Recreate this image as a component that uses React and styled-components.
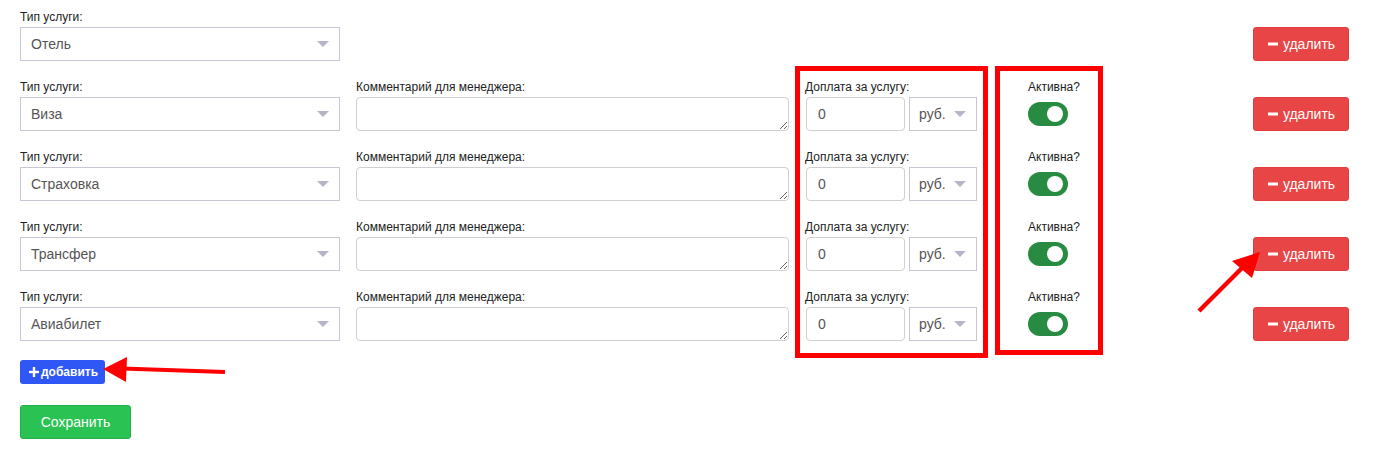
import styled, { createGlobalStyle } from 'styled-components';

const GlobalStyle = createGlobalStyle`
  body {
    margin: 0;
    background: #fff;
    font-family: "Liberation Sans", Arial, sans-serif;
    color: #222;
  }
`;

const services = ['Виза', 'Страховка', 'Трансфер', 'Авиабилет'];

const MinusIcon = () => (
  <svg width="10" height="10" viewBox="0 0 10 10">
    <rect x="0" y="3.5" width="10" height="3" fill="#fff" />
  </svg>
);

const PlusIcon = () => (
  <svg width="10" height="10" viewBox="0 0 10 10">
    <rect x="0" y="3.8" width="10" height="2.4" fill="#fff" />
    <rect x="3.8" y="0" width="2.4" height="10" fill="#fff" />
  </svg>
);

const App = () => {
  return (
    <Page>
      <GlobalStyle />
      <ServiceRow>
        <Field>
          <Label>Тип услуги:</Label>
          <Select>Отель</Select>
        </Field>
        <DeleteButton>
          <MinusIcon />
          удалить
        </DeleteButton>
      </ServiceRow>

      {services.map((name) => (
        <ServiceRow key={name}>
          <Field>
            <Label>Тип услуги:</Label>
            <Select>{name}</Select>
          </Field>
          <Field>
            <Label>Комментарий для менеджера:</Label>
            <Comment />
          </Field>
          <Field>
            <Label>Доплата за услугу:</Label>
            <PriceGroup>
              <PriceInput defaultValue="0" />
              <Select $small>руб.</Select>
            </PriceGroup>
          </Field>
          <ActiveField>
            <Label>Активна?</Label>
            <Toggle $on />
          </ActiveField>
          <DeleteButton>
            <MinusIcon />
            удалить
          </DeleteButton>
        </ServiceRow>
      ))}

      <AddButton>
        <PlusIcon />
        добавить
      </AddButton>
      <SaveButton>Сохранить</SaveButton>

      <Highlight $left={795} $top={66} $width={193} $height={292} />
      <Highlight $left={995} $top={66} $width={108} $height={289} />
      <Arrows width="1383" height="454" viewBox="0 0 1383 454">
        <line x1="225" y1="372" x2="122" y2="368.5" stroke="#f00" strokeWidth="4" />
        <polygon points="103,369 127,357 126,382" fill="#f00" />
        <line x1="1199" y1="311" x2="1243" y2="267" stroke="#f00" strokeWidth="4.5" />
        <polygon points="1260,252 1232,261 1252,278" fill="#f00" />
      </Arrows>
    </Page>
  );
};

const Page = styled.div`
  position: relative;
  width: 1383px;
  height: 454px;
  box-sizing: border-box;
  padding: 10px 34px 0 20px;
  overflow: hidden;
`;

const ServiceRow = styled.div`
  display: grid;
  grid-template-columns: 320px 433px 172px 122px 1fr 96px;
  column-gap: 16px;
  margin-bottom: 19px;
`;

const Field = styled.div`
  display: flex;
  flex-direction: column;
`;

const ActiveField = styled.div`
  display: flex;
  flex-direction: column;
  align-items: flex-start;
  padding-left: 35px;

  & > div:first-child {
    align-self: stretch;
    text-align: center;
    margin-left: -35px;
    margin-bottom: 8px;
  }
`;

const Label = styled.div`
  font-size: 12px;
  line-height: 14px;
  color: #222;
  margin-bottom: 3px;
  white-space: nowrap;
`;

const Select = styled.div`
  position: relative;
  box-sizing: border-box;
  height: 34px;
  width: ${(p) => (p.$small ? '70px' : '100%')};
  border: 1px solid #c7c5d6;
  padding: 0 ${(p) => (p.$small ? '9px' : '10px')};
  font-size: 14px;
  line-height: 32px;
  color: #555;
  background: #fff;

  &::after {
    content: '';
    position: absolute;
    right: 10px;
    top: 13px;
    border-left: 6px solid transparent;
    border-right: 6px solid transparent;
    border-top: 6px solid #b6b4c6;
  }
`;

const Comment = styled.textarea`
  box-sizing: border-box;
  height: 34px;
  width: 100%;
  margin: 0;
  border: 1px solid #cfcfd4;
  border-radius: 4px;
  resize: vertical;
  font-family: inherit;
  font-size: 14px;
`;

const PriceGroup = styled.div`
  display: flex;
  gap: 4px;
  padding-left: 1px;
`;

const PriceInput = styled.input`
  box-sizing: border-box;
  width: 99px;
  height: 34px;
  margin: 0;
  border: 1px solid #cfcfd4;
  border-radius: 4px;
  padding: 0 11px;
  font-family: inherit;
  font-size: 14px;
  color: #555;
`;

const Toggle = styled.div`
  position: relative;
  width: 40px;
  height: 24px;
  border-radius: 12px;
  background: ${(p) => (p.$on ? '#288b42' : '#ccc')};

  &::after {
    content: '';
    position: absolute;
    top: 4px;
    ${(p) => (p.$on ? 'right: 5px;' : 'left: 5px;')}
    width: 16px;
    height: 16px;
    border-radius: 50%;
    background: #fff;
  }
`;

const DeleteButton = styled.button`
  grid-column: 6;
  align-self: end;
  display: flex;
  align-items: center;
  justify-content: center;
  gap: 5px;
  height: 34px;
  margin: 0;
  border: 1px solid #e23c3c;
  border-radius: 3px;
  background: #e84646;
  color: #fff;
  font-family: inherit;
  font-size: 14px;
  padding: 0 0 0 1px;
`;

const AddButton = styled.button`
  display: flex;
  align-items: center;
  gap: 2px;
  height: 24px;
  margin: 0 0 21px;
  padding: 0 7px 0 9px;
  border: none;
  border-radius: 3px;
  background: #2f57f6;
  color: #fff;
  font-family: inherit;
  font-size: 12px;
  font-weight: bold;
`;

const SaveButton = styled.button`
  display: block;
  width: 111px;
  height: 34px;
  margin: 0;
  border: 1px solid #22b04a;
  border-radius: 3px;
  background: #2ac253;
  color: #fff;
  font-family: inherit;
  font-size: 14px;
`;

const Highlight = styled.div`
  position: absolute;
  left: ${(p) => p.$left}px;
  top: ${(p) => p.$top}px;
  width: ${(p) => p.$width}px;
  height: ${(p) => p.$height}px;
  box-sizing: border-box;
  border: 5px solid #f00;
  pointer-events: none;
`;

const Arrows = styled.svg`
  position: absolute;
  left: 0;
  top: 0;
  pointer-events: none;
`;

export default App;
